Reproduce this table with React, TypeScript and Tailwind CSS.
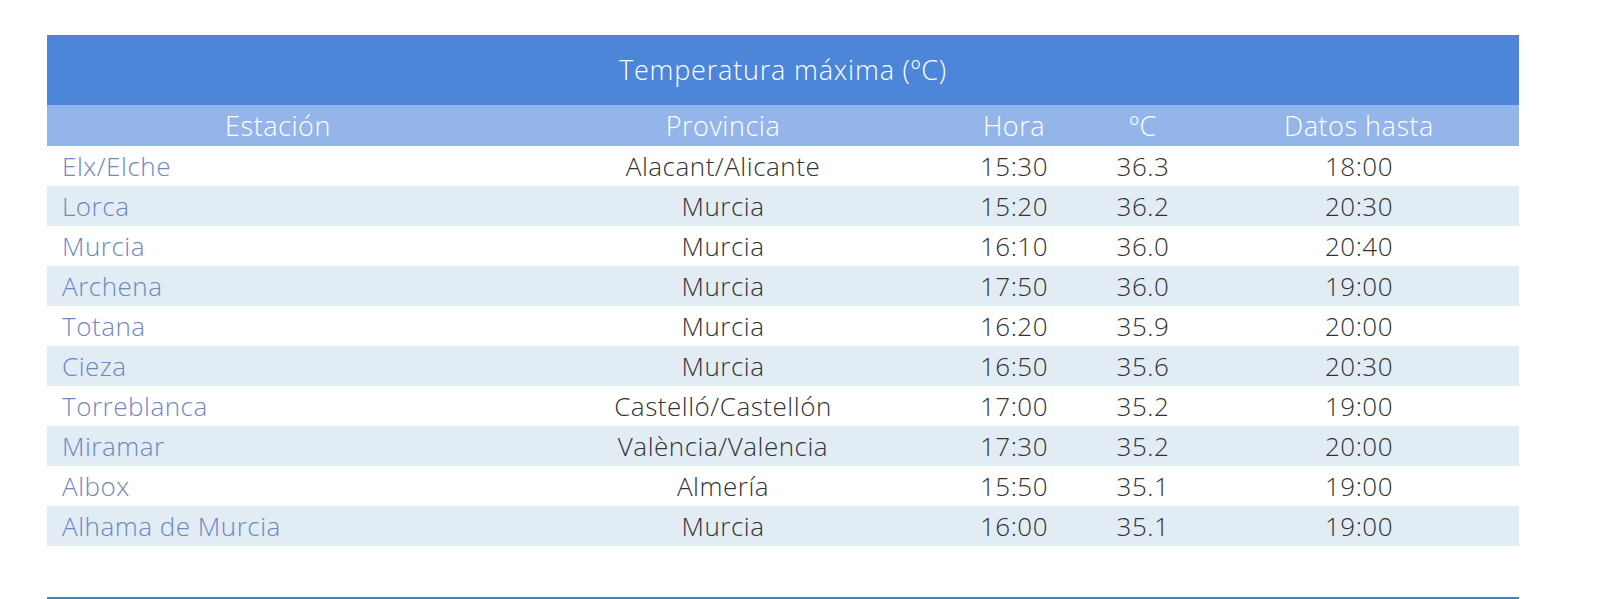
const rows = [
  ['Elx/Elche', 'Alacant/Alicante', '15:30', '36.3', '18:00'],
  ['Lorca', 'Murcia', '15:20', '36.2', '20:30'],
  ['Murcia', 'Murcia', '16:10', '36.0', '20:40'],
  ['Archena', 'Murcia', '17:50', '36.0', '19:00'],
  ['Totana', 'Murcia', '16:20', '35.9', '20:00'],
  ['Cieza', 'Murcia', '16:50', '35.6', '20:30'],
  ['Torreblanca', 'Castelló/Castellón', '17:00', '35.2', '19:00'],
  ['Miramar', 'València/Valencia', '17:30', '35.2', '20:00'],
  ['Albox', 'Almería', '15:50', '35.1', '19:00'],
  ['Alhama de Murcia', 'Murcia', '16:00', '35.1', '19:00'],
];

const cols = 'grid grid-cols-[462px_428px_154px_94px_1fr]';

export default function App() {
  return (
    <div className="bg-white min-h-[599px] pt-[35px] px-[47px] font-['Open_Sans',sans-serif] font-light">
      <div className="w-[1472px]">
        <div className="h-[70px] bg-[#4d86d9] flex items-center justify-center text-[27px] tracking-[0.03em] text-white">
          Temperatura máxima (ºC)
        </div>
        <div className={`${cols} h-[41px] bg-[#94b5e9] text-[27px] tracking-[0.02em] leading-none text-white items-center`}>
          <div className="text-center">Estación</div>
          <div className="text-center">Provincia</div>
          <div className="text-center">Hora</div>
          <div className="text-center pl-[10px]">ºC</div>
          <div className="text-center pl-[14px]">Datos hasta</div>
        </div>
        {rows.map((r, i) => (
          <div
            key={i}
            className={`${cols} h-[40px] items-center text-[26px] tracking-[0.02em] leading-none ${i % 2 === 1 ? 'bg-[#e1ecf4]' : 'bg-white'}`}
          >
            <div className="pl-[15px] text-[#6f87c2]">{r[0]}</div>
            <div className="text-center text-[#333333]">{r[1]}</div>
            <div className="text-center text-[#333333]">{r[2]}</div>
            <div className="text-center pl-[10px] text-[#333333]">{r[3]}</div>
            <div className="text-center pl-[14px] text-[#333333]">{r[4]}</div>
          </div>
        ))}
        <div className="mt-[51px] h-[2px] bg-[#4d7fc9]" />
      </div>
    </div>
  );
}
